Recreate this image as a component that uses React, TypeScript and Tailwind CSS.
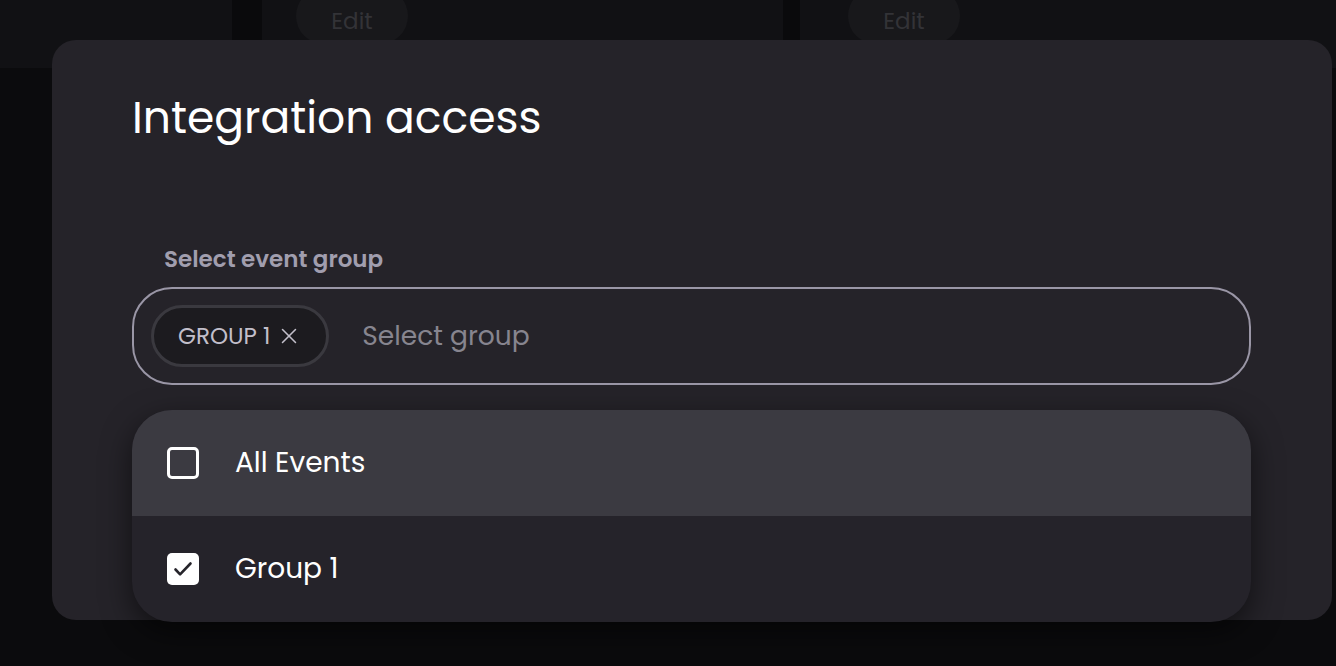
import { X } from "lucide-react";

const font = "font-['Poppins','Inter',sans-serif]";

function Checkbox({ checked }: { checked?: boolean }) {
  if (checked) {
    return (
      <div className="flex h-8 w-8 items-center justify-center rounded-[5px] bg-white">
        <svg width="24" height="24" viewBox="0 0 24 24" fill="none">
          <path d="M4.5 12.5l4.6 4.8L19.5 6.5" stroke="#26242b" strokeWidth="2.6" strokeLinecap="round" strokeLinejoin="round" />
        </svg>
      </div>
    );
  }
  return <div className="h-8 w-8 rounded-[5px] border-[3px] border-white" />;
}

function Backdrop() {
  return (
    <div className="flex h-[68px]">
      <div className="w-[232px] bg-[#111114]" />
      <div className="w-[30px] bg-[#0a0a0c]" />
      <div className="w-[521px] bg-[#111114] pl-[34px]">
        <div className="-mt-[12px] flex h-[56px] w-[112px] items-center justify-center rounded-full bg-[#18181b] pt-[10px] text-[23px] text-[#333337]">
          Edit
        </div>
      </div>
      <div className="w-[17px] bg-[#0a0a0c]" />
      <div className="flex-1 bg-[#111114] pl-[48px]">
        <div className="-mt-[12px] flex h-[56px] w-[112px] items-center justify-center rounded-full bg-[#18181b] pt-[10px] text-[23px] text-[#333337]">
          Edit
        </div>
      </div>
    </div>
  );
}

export default function App() {
  const options = [
    { label: "All Events", checked: false },
    { label: "Group 1", checked: true },
  ];

  return (
    <div className={`relative h-[666px] w-full overflow-hidden bg-[#0b0b0d] ${font}`}>
      <Backdrop />

      <div className="absolute left-[52px] top-[40px] h-[580px] w-[1280px] rounded-3xl bg-[#252329] pl-[80px] pr-[81px] pt-[50px]">
        <h2 className="text-[44px] font-normal leading-[56px] text-white">Integration access</h2>

        <div className="mt-[98px]">
          <p className="pl-[32px] text-[23px] font-semibold leading-[30px] text-[#a19eae]">Select event group</p>
          <div className="mt-[13px] flex h-[98px] items-center gap-[33px] rounded-[40px] border-2 border-[#9a96a6] pl-[17px]">
            <div className="flex h-[62px] items-center gap-[6px] rounded-full border-[3px] border-[#3a393f] bg-[#1c1b1f] pl-[24px] pr-[24px] text-[23px] text-[#c2bfca]">
              <span className="leading-none">GROUP 1</span>
              <X size={26} strokeWidth={1.4} />
            </div>
            <span className="text-[26.5px] text-[#87858f]">Select group</span>
          </div>
        </div>

        <div className="absolute left-[80px] right-[81px] top-[370px] overflow-hidden rounded-[40px] bg-[#25232a] shadow-[0_10px_30px_rgba(0,0,0,0.55)]">
          {options.map((o, i) => (
            <div
              key={o.label}
              className={`flex h-[106px] items-center gap-[36px] pl-[35px] ${i === 0 ? "bg-[#3b3a41]" : ""}`}
            >
              <Checkbox checked={o.checked} />
              <span className="text-[28px] text-white">{o.label}</span>
            </div>
          ))}
        </div>
      </div>
    </div>
  );
}
